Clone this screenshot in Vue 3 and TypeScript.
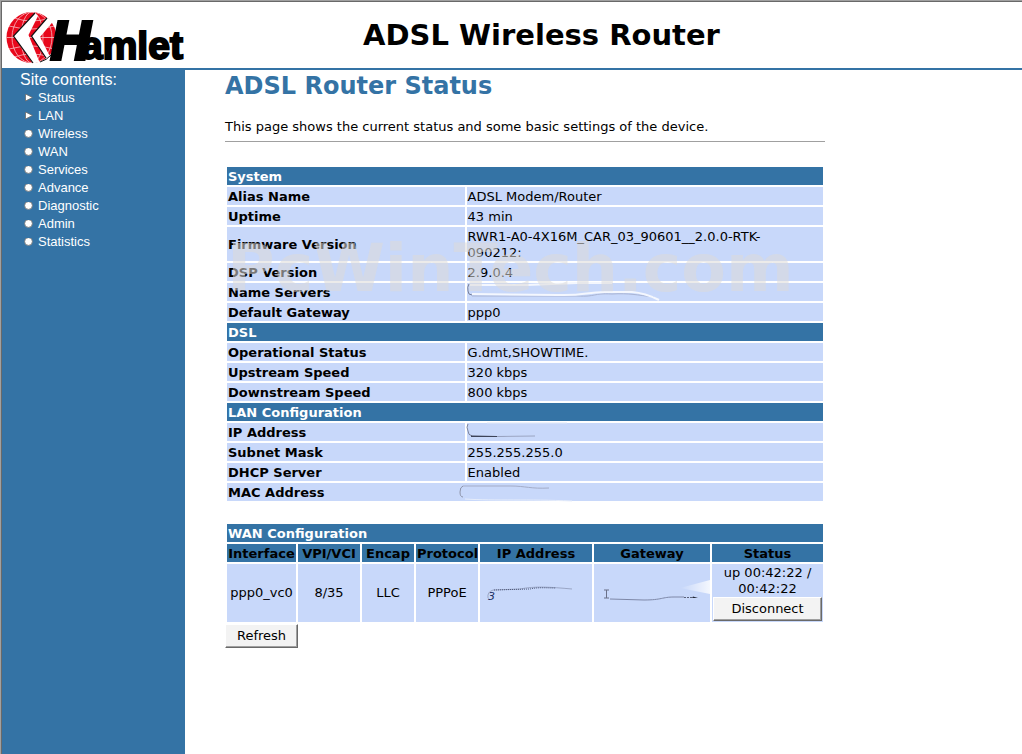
<script setup lang="ts">
interface NavItem {
  label: string
  page: boolean
}
interface InfoRow {
  label: string
  value: string
  smudge?: 'dns' | 'ip' | 'mac'
}
interface Section {
  title: string
  rows: InfoRow[]
}

const nav: NavItem[] = [
  { label: 'Status', page: true },
  { label: 'LAN', page: true },
  { label: 'Wireless', page: false },
  { label: 'WAN', page: false },
  { label: 'Services', page: false },
  { label: 'Advance', page: false },
  { label: 'Diagnostic', page: false },
  { label: 'Admin', page: false },
  { label: 'Statistics', page: false },
]

const sections: Section[] = [
  {
    title: 'System',
    rows: [
      { label: 'Alias Name', value: 'ADSL Modem/Router' },
      { label: 'Uptime', value: '43 min' },
      { label: 'Firmware Version', value: 'RWR1-A0-4X16M_CAR_03_90601__2.0.0-RTK-090212:' },
      { label: 'DSP Version', value: '2.9.0.4' },
      { label: 'Name Servers', value: '', smudge: 'dns' },
      { label: 'Default Gateway', value: 'ppp0' },
    ],
  },
  {
    title: 'DSL',
    rows: [
      { label: 'Operational Status', value: 'G.dmt,SHOWTIME.' },
      { label: 'Upstream Speed', value: '320 kbps' },
      { label: 'Downstream Speed', value: '800 kbps' },
    ],
  },
  {
    title: 'LAN Configuration',
    rows: [
      { label: 'IP Address', value: '', smudge: 'ip' },
      { label: 'Subnet Mask', value: '255.255.255.0' },
      { label: 'DHCP Server', value: 'Enabled' },
      { label: 'MAC Address', value: '', smudge: 'mac' },
    ],
  },
]

const wanHeads: string[] = ['Interface', 'VPI/VCI', 'Encap', 'Protocol', 'IP Address', 'Gateway', 'Status']
</script>

<template>
  <div class="page">
    <header class="top">
      <svg class="logo" width="183" height="64" viewBox="2 2 183 64" role="img" aria-label="Hamlet">
        <defs>
          <clipPath id="globe"><ellipse cx="31.500" cy="36.500" rx="25" ry="25.500" /></clipPath>
        </defs>
        <g clip-path="url(#globe)">
          <rect x="6" y="10" width="52" height="53" fill="#e8081c" />
          <g fill="none" stroke="#fbd5d8" stroke-width="0.700">
            <ellipse cx="32" cy="36.500" rx="20" ry="25.500" />
            <ellipse cx="32" cy="36.500" rx="11" ry="25.500" />
            <path d="M6 36.500H58M9 25Q32 31 55 25M9 48Q32 42 55 48M14 17Q32 23 50 17M14 56Q32 50 50 56" />
          </g>
        </g>
        <path d="M35 12L13.500 35L33 62.500L39.500 61L28.500 34L38 15Z" fill="#fff" />
        <path d="M47 17L31.500 35L46 57L50 55.500L40 36L53.500 20Z" fill="#fff" />
        <path d="M35 12L13.500 35L33 62M47 17L31.500 35L46 57" fill="none" stroke="#111" stroke-width="1.200" />
        <path d="M40 61Q47 59 51 54Q57 47 57 37" fill="none" stroke="#111" stroke-width="1" />
        <text class="logo-cap" x="51" y="58">H</text>
        <text class="logo-rest" x="81" y="58">amlet</text>
      </svg>
      <h1>ADSL Wireless Router</h1>
    </header>

    <div class="body">
      <nav class="side" aria-label="Site contents">
        <p class="side-title">Site contents:</p>
        <ul>
          <li v-for="item in nav" :key="item.label">
            <svg width="9" height="9" viewBox="0 0 9 9" aria-hidden="true">
              <path v-if="item.page" d="M1.500 0L8.500 3.500L1.500 7Z" fill="#fff" stroke="#6b6b6b" stroke-width="0.800" />
              <circle v-else cx="4.500" cy="3.500" r="3.900" fill="#fff" stroke="#6b6b6b" stroke-width="0.800" />
            </svg>
            <a href="#">{{ item.label }}</a>
          </li>
        </ul>
      </nav>

      <main class="content">
        <h2>ADSL Router Status</h2>
        <p class="intro">This page shows the current status and some basic settings of the device.</p>
        <hr />

        <div class="info-wrap">
          <table class="info">
            <colgroup>
              <col class="c-label" />
              <col />
            </colgroup>
            <tbody v-for="s in sections" :key="s.title">
              <tr>
                <th class="bar" colspan="2" scope="colgroup">{{ s.title }}</th>
              </tr>
              <tr v-for="r in s.rows" :key="r.label">
                <template v-if="r.smudge === 'mac'">
                  <th class="cell" scope="row" colspan="2">
                    {{ r.label }}
                    <svg class="smudge" viewBox="0 0 596 18" width="596" height="18" aria-hidden="true">
                      <path d="M236 3Q233 4 233 9Q233 14 236 14" stroke="#8d93a8" />
                      <path d="M236 3H284C298 3 304 6 322 5" stroke="#a3acc8" />
                      <path d="M238 16C270 18 300 16 345 18" stroke="#e6edfb" />
                    </svg>
                  </th>
                </template>
                <template v-else>
                  <th class="cell" scope="row">{{ r.label }}</th>
                  <td class="cell">
                    {{ r.value }}
                    <svg v-if="r.smudge === 'dns'" class="smudge" viewBox="0 0 356 18" width="356" height="18" aria-hidden="true">
                      <path d="M2 1Q0 4 1 8Q1 12 5 12" stroke="#777f99" />
                      <path d="M5 13H110C130 14 125 10 145 11C162 10 170 12 187 14" stroke="#a9b4d4" />
                      <path d="M3 2H60L110 0H145M5 11L90 12C118 13 118 9 138 9H165Q178 10 192 17" stroke="#f4f7fe" stroke-width="2" />
                    </svg>
                    <svg v-if="r.smudge === 'ip'" class="smudge" viewBox="0 0 356 18" width="356" height="18" aria-hidden="true">
                      <path d="M1 1Q-1 4 1 8Q1 12 5 13" stroke="#7c849d" />
                      <path d="M4 12.500L30 13L40 14H4Z" fill="#3d4358" stroke="none" />
                      <path d="M30 13.500L68 13" stroke="#9ba5c2" />
                      <path d="M20 0H100" stroke="#dfe7f7" />
                    </svg>
                  </td>
                </template>
              </tr>
            </tbody>
          </table>
          <div class="watermark" aria-hidden="true">PcWinTech.com</div>
        </div>

        <form @submit.prevent>
          <table class="wan">
            <colgroup>
              <col class="w-if" />
              <col class="w-vpi" />
              <col class="w-enc" />
              <col class="w-pro" />
              <col class="w-ip" />
              <col class="w-gw" />
              <col />
            </colgroup>
            <thead>
              <tr>
                <th class="bar" colspan="7" scope="colgroup">WAN Configuration</th>
              </tr>
              <tr>
                <th v-for="h in wanHeads" :key="h" class="head" scope="col">{{ h }}</th>
              </tr>
            </thead>
            <tbody>
              <tr>
                <td class="cell">ppp0_vc0</td>
                <td class="cell">8/35</td>
                <td class="cell">LLC</td>
                <td class="cell">PPPoE</td>
                <td class="cell">
                  <svg class="smudge" viewBox="0 0 112 58" width="112" height="58" aria-hidden="true">
                    <text class="digit" x="8" y="36">3</text>
                    <path d="M8 34Q7 28 13 26L40 25C55 22 70 23 92 25" stroke="#9aa6c6" />
                    <path d="M14 26L50 25C58 23 66 24 76 24" stroke="#4f5a7b" stroke-dasharray="1 1" />
                  </svg>
                </td>
                <td class="cell">
                  <svg class="smudge" viewBox="0 0 116 58" width="116" height="58" aria-hidden="true">
                    <defs>
                      <linearGradient id="flare" x1="0" x2="1" y1="0" y2="0">
                        <stop offset="0" stop-color="#fff" stop-opacity="0" />
                        <stop offset="1" stop-color="#fff" stop-opacity="0.800" />
                      </linearGradient>
                    </defs>
                    <path d="M10 26H15M10 34H15M12.500 26V34" stroke="#6a7088" />
                    <path d="M16 35L50 36C68 36 68 33 80 33H90" stroke="#7e88a8" />
                    <path d="M90 33.500H100" stroke="#596079" stroke-dasharray="2 1" />
                    <path d="M99 32.500L104 34H98Z" fill="#222839" stroke="none" />
                    <path d="M86 24L116 16V30Z" fill="url(#flare)" stroke="none" />
                  </svg>
                </td>
                <td class="cell">
                  up 00:42:22 / 00:42:22
                  <button type="button" class="btn wide-btn">Disconnect</button>
                </td>
              </tr>
            </tbody>
          </table>
          <button type="submit" class="btn">Refresh</button>
        </form>
      </main>
    </div>
  </div>
</template>

<style>
body {
  margin: 0;
  background: #fff;
}
</style>

<style scoped>
.page {
  box-sizing: border-box;
  min-height: 100vh;
  display: flex;
  flex-direction: column;
  border-top: 1px solid #a0a0a0;
  border-left: 1px solid #a0a0a0;
  box-shadow: inset 1px 1px 0 #696969;
  padding: 1px 0 0 1px;
  font-family: Verdana, "DejaVu Sans", sans-serif;
  font-size: 13px;
  line-height: 16px;
  color: #000;
}
.top {
  display: flex;
  align-items: center;
  height: 66px;
  border-bottom: 2px solid #3473a5;
}
.logo {
  flex: none;
  overflow: visible;
}
.logo-cap,
.logo-rest {
  font-family: "Liberation Sans", Arial, sans-serif;
  font-weight: bold;
  fill: #000;
  stroke: #000;
}
.logo-cap {
  font-size: 54px;
  font-style: italic;
  stroke-width: 4px;
}
.logo-rest {
  font-size: 39px;
  stroke-width: 2px;
}
h1 {
  flex: 1;
  margin: 0;
  padding: 0 124px 0 0;
  text-align: center;
  font-size: 29px;
  line-height: 36px;
}
.body {
  flex: 1;
  display: flex;
}
.side {
  flex: none;
  box-sizing: border-box;
  width: 183px;
  padding: 1px 0 0 18px;
  background: #3473a5;
  color: #fff;
  font-family: "Liberation Sans", Arial, sans-serif;
}
.side-title {
  margin: 0;
  font-size: 16px;
  line-height: 18px;
}
.side ul {
  list-style: none;
  margin: 0;
  padding: 0 0 0 4px;
}
.side li {
  display: flex;
  align-items: center;
  gap: 5px;
  height: 18px;
}
.side a {
  color: #fff;
  text-decoration: none;
  line-height: 18px;
}
.content {
  flex: 1;
  min-width: 0;
  padding: 1px 40px 0;
}
h2 {
  margin: 0;
  font-size: 24px;
  line-height: 30px;
  color: #3473a5;
}
.intro {
  margin: 18px 0 6px;
}
hr {
  max-width: 600px;
  margin: 0;
  border: 0;
  border-top: 1px solid #a0a0a0;
}
.info-wrap {
  position: relative;
  max-width: 600px;
  margin: 23px 0 19px;
}
table {
  width: 100%;
  max-width: 600px;
  table-layout: fixed;
  border-collapse: separate;
  border-spacing: 2px;
}
.info tbody th {
  text-align: left;
}
.info td {
  padding-right: 12px;
}
.c-label {
  width: 40%;
}
.bar,
.head,
.cell {
  position: relative;
  padding: 2px 1px 0;
}
.bar {
  background: #3473a5;
  color: #fff;
  text-align: left;
}
.head {
  background: #3473a5;
  text-align: center;
  white-space: nowrap;
}
.cell {
  background: #c8d8fa;
  height: 16px;
}
.wan td {
  padding: 1px;
  text-align: center;
}
.w-if {
  width: 69px;
}
.w-vpi {
  width: 62px;
}
.w-enc {
  width: 52px;
}
.w-pro {
  width: 62px;
}
.w-ip {
  width: 112px;
}
.w-gw {
  width: 116px;
}
.smudge {
  position: absolute;
  left: 0;
  top: 0;
  overflow: visible;
  fill: none;
}
.digit {
  font-size: 11px;
  font-style: italic;
  fill: #1b2f63;
}
.watermark {
  position: absolute;
  left: 2px;
  top: 68px;
  font-family: "DejaVu Sans", Verdana, sans-serif;
  font-weight: bold;
  font-size: 65px;
  line-height: 72px;
  color: rgba(221, 219, 216, 0.55);
  pointer-events: none;
}
.btn {
  box-sizing: border-box;
  display: block;
  height: 24px;
  margin: 0;
  padding: 0 11px;
  border: 1px solid #fff;
  border-right-color: #696969;
  border-bottom-color: #696969;
  box-shadow: inset -1px -1px 0 #a0a0a0;
  background: #f3f3f3;
  color: #000;
  font: inherit;
}
.wide-btn {
  width: 100%;
  padding: 0;
}
</style>
